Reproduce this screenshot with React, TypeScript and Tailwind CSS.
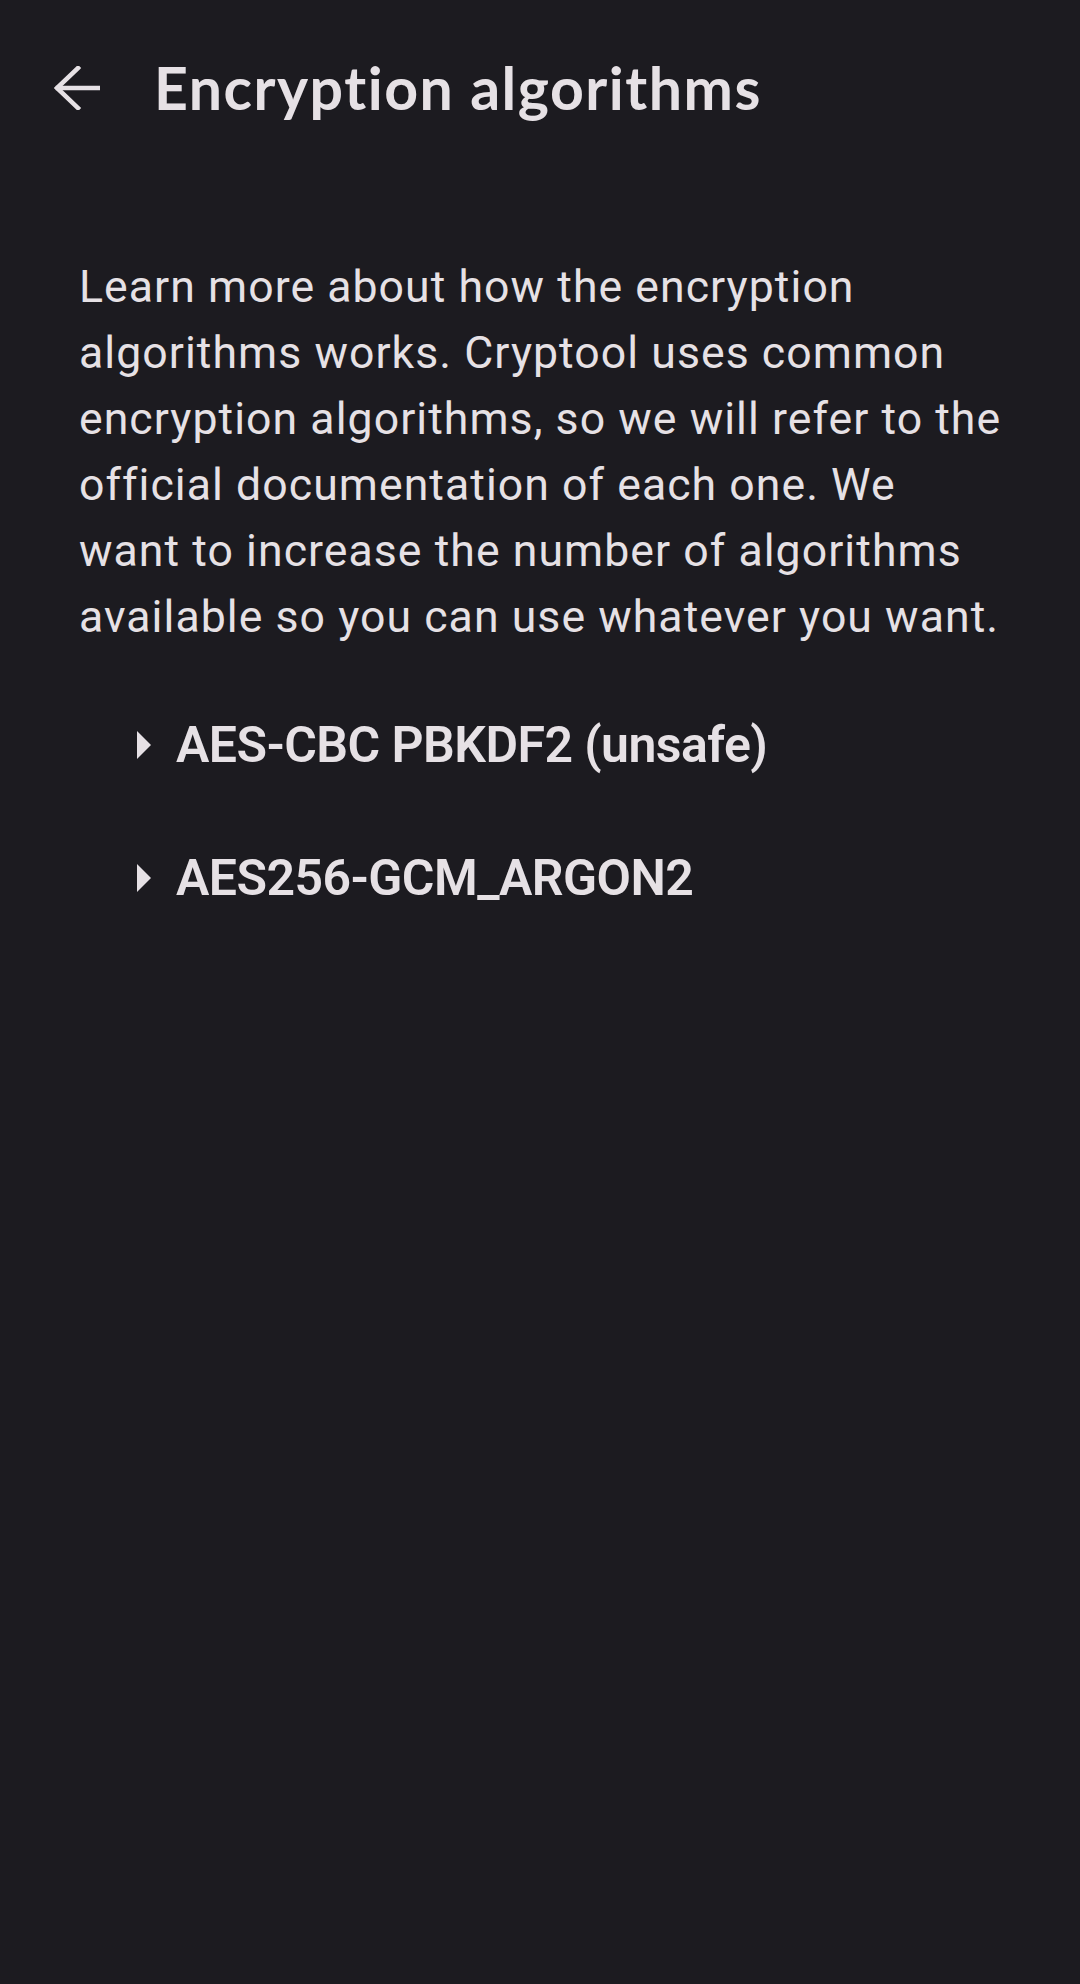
import React from 'react';

const algorithms = ['AES-CBC PBKDF2 (unsafe)', 'AES256-GCM_ARGON2'];

const intro = [
  'Learn more about how the encryption',
  'algorithms works. Cryptool uses common',
  'encryption algorithms, so we will refer to the',
  'official documentation of each one. We',
  'want to increase the number of algorithms',
  'available so you can use whatever you want.',
];

const App: React.FC = () => {
  return (
    <div className="min-h-[1984px] w-[1080px] bg-[#1c1b20] text-[#e6e1e5]">
      <header className="flex h-[176px] items-center">
        <button type="button" className="ml-[44px] flex h-[66px] w-[66px] items-center justify-center">
          <svg width="46" height="44" viewBox="0 0 46 44" fill="none" stroke="#e6e1e5" strokeWidth="4.5" strokeLinecap="square">
            <path d="M44 22H4" />
            <path d="M24 2L3 22l21 20" />
          </svg>
        </button>
        <h1 className="ml-[44px] font-['Lato',sans-serif] text-[59px] font-bold tracking-[1.5px]">
          Encryption algorithms
        </h1>
      </header>

      <main className="pl-[79px] pr-[40px] pt-[78px]">
        <p className="whitespace-nowrap font-['Roboto',sans-serif] text-[44.6px] leading-[66px] tracking-[1.05px]">
          {intro.map((line, i) => (
            <React.Fragment key={i}>
              {line}
              {i < intro.length - 1 && <br />}
            </React.Fragment>
          ))}
        </p>

        <ul className="mt-[65px] flex flex-col gap-[73px] pl-[58px]">
          {algorithms.map((name) => (
            <li key={name} className="flex items-center gap-[25px]">
              <svg width="14" height="28" viewBox="0 0 14 28" fill="#e6e1e5">
                <path d="M0 0l14 14L0 28z" />
              </svg>
              <span className="font-['Roboto',sans-serif] text-[50px] font-semibold leading-[60px] tracking-[-0.55px]">
                {name}
              </span>
            </li>
          ))}
        </ul>
      </main>
    </div>
  );
};

export default App;
